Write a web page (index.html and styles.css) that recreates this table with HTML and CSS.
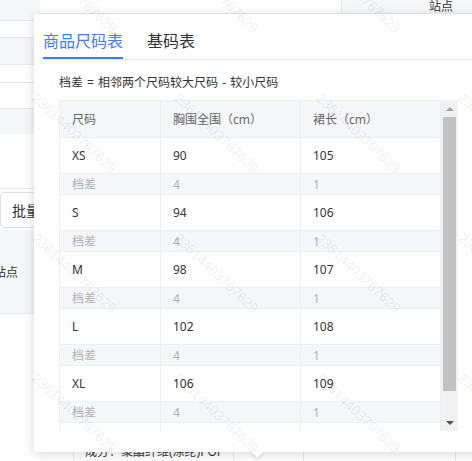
FILE: index.html
```html
<!DOCTYPE html>
<html lang="zh-CN">
<head>
<meta charset="utf-8">
<title>商品尺码表</title>
<link rel="stylesheet" href="styles.css">
</head>
<body>
<div class="page">
  <div class="bg">
    <div class="bg-main">
      <div class="bg-left">
        <div class="r grey h20"></div>
        <div class="r h16"></div>
        <div class="r grey h26"></div>
        <div class="r h17"></div>
        <div class="r h25"></div>
        <div class="r grey h25 nob"></div>
        <div class="r h54"></div>
        <div class="r-btn nob"><span class="btn">批量设置</span></div>
        <div class="r grey h83 site"><span>站点</span></div>
      </div>
      <div class="bg-right">
        <div class="bg-top">
          <div class="bg-top-blank"></div>
          <div class="bg-top-cell">站点</div>
        </div>
      </div>
    </div>
    <div class="bg-foot">
      <div class="fc w0"></div>
      <div class="fc w1">成分：聚酯纤维(涤纶)POF</div>
      <div class="fc w2"></div>
      <div class="fc w3"></div>
      <div class="fc w4"></div>
    </div>
  </div>

  <div class="popover">
    <div class="tabs">
      <div class="tab active">商品尺码表</div>
      <div class="tab">基码表</div>
    </div>
    <div class="pane">
      <div class="desc">档差 = 相邻两个尺码较大尺码 - 较小尺码</div>
      <div class="tbl-wrap">
        <div class="tbl">
          <div class="tr th"><div class="td">尺码</div><div class="td">胸围全围（cm）</div><div class="td">裙长（cm）</div></div>
          <div class="tr"><div class="td">XS</div><div class="td">90</div><div class="td">105</div></div>
          <div class="tr diff"><div class="td">档差</div><div class="td">4</div><div class="td">1</div></div>
          <div class="tr"><div class="td">S</div><div class="td">94</div><div class="td">106</div></div>
          <div class="tr diff"><div class="td">档差</div><div class="td">4</div><div class="td">1</div></div>
          <div class="tr"><div class="td">M</div><div class="td">98</div><div class="td">107</div></div>
          <div class="tr diff"><div class="td">档差</div><div class="td">4</div><div class="td">1</div></div>
          <div class="tr"><div class="td">L</div><div class="td">102</div><div class="td">108</div></div>
          <div class="tr diff"><div class="td">档差</div><div class="td">4</div><div class="td">1</div></div>
          <div class="tr"><div class="td">XL</div><div class="td">106</div><div class="td">109</div></div>
          <div class="tr diff"><div class="td">档差</div><div class="td">4</div><div class="td">1</div></div>
          <div class="tr"><div class="td">XXL</div><div class="td">110</div><div class="td">110</div></div>
        </div>
        <div class="sb">
          <div class="sb-btn"><span class="arr up"></span></div>
          <div class="sb-thumb"></div>
          <div class="sb-rest"></div>
          <div class="sb-btn"><span class="arr down"></span></div>
        </div>
      </div>
    </div>
  </div>

  <div class="wm">
    <div class="wm-c"><span>23614403767629</span></div>
    <div class="wm-c"><span>23614403767629</span></div>
    <div class="wm-c"><span>23614403767629</span></div>
    <div class="wm-c"><span>23614403767629</span></div>
    <div class="wm-c"><span>23614403767629</span></div>
    <div class="wm-c"><span>23614403767629</span></div>
    <div class="wm-c"><span>23614403767629</span></div>
    <div class="wm-c"><span>23614403767629</span></div>
    <div class="wm-c"><span>23614403767629</span></div>
    <div class="wm-c"><span>23614403767629</span></div>
    <div class="wm-c"><span>23614403767629</span></div>
    <div class="wm-c"><span>23614403767629</span></div>
    <div class="wm-c"><span>23614403767629</span></div>
    <div class="wm-c"><span>23614403767629</span></div>
    <div class="wm-c"><span>23614403767629</span></div>
    <div class="wm-c"><span>23614403767629</span></div>
    <div class="wm-c"><span>23614403767629</span></div>
    <div class="wm-c"><span>23614403767629</span></div>
    <div class="wm-c"><span>23614403767629</span></div>
    <div class="wm-c"><span>23614403767629</span></div>
  </div>
</div>
</body>
</html>
```

FILE: styles.css
```css
* { box-sizing: border-box; }
html, body { margin: 0; padding: 0; overflow: hidden; background: #fff; }
body {
  font-family: "Noto Sans", "Noto Sans CJK SC", sans-serif;
  font-size: 12px;
  color: #333;
}
.page {
  position: relative;
  width: 472px;
  height: 461px;
  overflow: hidden;
}

/* ---------- background page ---------- */
.bg { display: flex; flex-direction: column; }
.bg-main { display: flex; height: 440px; }
.bg-left { width: 40px; flex: 0 0 40px; overflow: hidden; display: flex; flex-direction: column; }
.r { border-bottom: 1px solid #e8e8e8; flex: 0 0 auto; }
.r.nob, .r-btn.nob { border-bottom: none; }
.grey { background: #f5f6f8; }
.h20 { height: 21px; }
.h16 { height: 17px; }
.h26 { height: 27px; }
.h17 { height: 18px; }
.h25 { height: 26px; }
.r.h25.nob { height: 25px; }
.h54 { height: 55px; }
.r-btn { height: 41px; padding-top: 3px; display: flex; }
.btn {
  display: flex; align-items: center;
  height: 36px; padding: 0 11px; white-space: nowrap;
  border: 1px solid #dcdfe6; border-radius: 4px;
  font-size: 14px; color: #333; background: #fff;
}
.h83 { height: 84px; }
.site {
  display: flex; align-items: center; justify-content: flex-end;
  padding-right: 22px;
  font-size: 12px; color: #333; white-space: nowrap;
}

.bg-right { flex: 1; display: flex; flex-direction: column; }
.bg-top { display: flex; height: 14px; border-bottom: 1px solid #e8e8e8; }
.bg-top-blank { flex: 1; }
.bg-top-cell {
  width: 131px; flex: 0 0 131px;
  background: #f5f6f8; border-left: 1px solid #e8e8e8;
  text-align: right; padding-right: 19px;
  font-size: 12px; line-height: 13px; color: #333;
}

.bg-foot { display: flex; height: 24px; }
.fc { border-right: 1px solid #e8e8e8; height: 24px; line-height: 24px; white-space: nowrap; overflow: hidden; }
.w0 { width: 74px; }
.w1 { width: 160px; padding-left: 11px; font-size: 12px; color: #333; }
.w2 { width: 70px; }
.w3 { width: 152px; }
.w4 { flex: 1; border-right: none; }

/* ---------- popover ---------- */
.popover {
  position: absolute;
  left: 34px;
  top: 14px;
  width: 449px;
  height: 438px;
  padding: 0 9px;
  background: #fff;
  border-radius: 4px;
  box-shadow: 0 2px 12px 0 rgba(0, 0, 0, 0.16);
  z-index: 5;
}
.popover::after {
  content: "";
  position: absolute;
  left: 219px;
  bottom: -4px;
  width: 9px;
  height: 9px;
  background: #fff;
  transform: rotate(45deg);
  box-shadow: 2px 2px 3px rgba(0, 0, 0, 0.08);
}
.tabs {
  display: flex;
  gap: 24px;
  height: 46px;
  border-bottom: 1px solid #e4e7ed;
}
.tab {
  height: 45px;
  padding-top: 15px;
  font-size: 16px;
  line-height: 24px;
  color: #303133;
  border-bottom: 2px solid transparent;
}
.tab.active { color: #3e7bfa; border-bottom-color: #3e7bfa; }

.pane { padding: 0 16px; }
.desc {
  padding-top: 14px;
  line-height: 18px;
  height: 32px;
  margin-bottom: 8px;
  font-size: 12px;
  color: #333;
  word-spacing: 1px;
}
.tbl-wrap { display: flex; height: 331px; overflow: hidden; }
.tbl {
  flex: 0 0 382px;
  border-left: 1px solid #ebeef5;
  border-top: 1px solid #ebeef5;
  display: flex;
  flex-direction: column;
}
.tr {
  display: grid;
  grid-template-columns: 101px 140px 140px;
  height: 36px;
  flex: 0 0 auto;
  border-bottom: 1px solid #ebeef5;
  color: #333;
}
.tr.th { height: 37px; background: #f5f6f8; color: #666; }
.tr.diff { height: 21px; background: #f5f6f8; color: #b0b0b0; }
.td {
  display: flex;
  align-items: center;
  padding-left: 12px;
  border-right: 1px solid #ebeef5;
  white-space: nowrap;
}

.sb { flex: 0 0 17px; width: 17px; background: #f1f1f1; display: flex; flex-direction: column; }
.sb-btn { height: 17px; flex: 0 0 17px; display: flex; align-items: center; justify-content: center; }
.sb-thumb { height: 274px; flex: 0 0 274px; margin: 0 2px; background: #c1c1c1; }
.sb-rest { flex: 1; }
.arr { width: 0; height: 0; border-left: 4px solid transparent; border-right: 4px solid transparent; }
.arr.up { border-bottom: 4px solid #a3a3a3; }
.arr.down { border-top: 4px solid #505050; }

/* ---------- watermark ---------- */
.wm {
  position: absolute;
  left: -138px;
  top: -77px;
  display: grid;
  grid-template-columns: repeat(5, 142px);
  grid-auto-rows: 140px;
  pointer-events: none;
  z-index: 10;
}
.wm-c { display: flex; align-items: center; justify-content: center; }
.wm-c span {
  display: block;
  transform: rotate(43deg);
  font-family: "Liberation Sans", sans-serif;
  font-size: 14px;
  color: rgba(0, 0, 0, 0.08);
  white-space: nowrap;
}
```
